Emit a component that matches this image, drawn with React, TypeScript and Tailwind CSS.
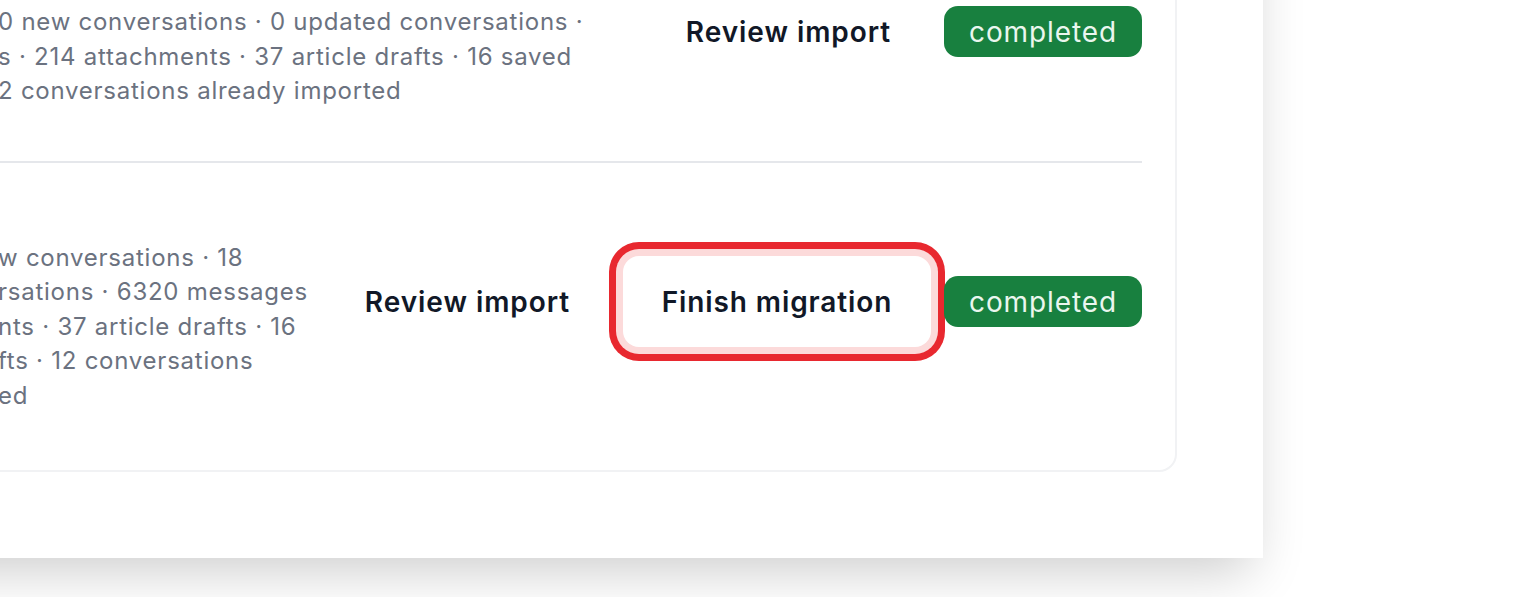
import React from "react";

const Line = ({ hidden, shown }: { hidden: string; shown: string }) => (
  <div className="flex whitespace-nowrap">
    <span className="flex w-0 justify-end">{hidden}</span>
    <span>{shown}</span>
  </div>
);

const Badge = () => (
  <span className="flex h-[51px] w-[198px] items-center justify-center rounded-[14px] bg-[#18803f] text-[28px] leading-none tracking-[0.9px] text-[#eaf6ee]">
    completed
  </span>
);

const ReviewButton = () => (
  <button className="flex h-[91px] w-[285px] items-center justify-center rounded-[16px] text-[28px] font-semibold leading-none tracking-[0.95px] text-[#111827]">
    Review import
  </button>
);

const FinishButton = () => (
  <button className="flex h-[91px] w-[308px] items-center justify-center rounded-[16px] bg-white text-[28px] font-semibold leading-none tracking-[0.9px] text-[#111827] shadow-[0_0_0_7px_#fcdada,0_0_0_14px_#e8282f]">
    Finish migration
  </button>
);

type Row = {
  title: string;
  lines: [string, string][];
  finish: boolean;
};

const rows: Row[] = [
  {
    title: "Zendesk · Mar 12, 2024",
    lines: [
      ["", "0 new conversations · 0 updated conversations ·"],
      ["6320 message", "s · 214 attachments · 37 article drafts · 16 saved"],
      ["drafts · 1", "2 conversations already imported"],
    ],
    finish: false,
  },
  {
    title: "Zendesk · Mar 10",
    lines: [
      ["3 ne", "w conversations · 18"],
      ["updated conve", "rsations · 6320 messages"],
      ["· 214 attachme", "nts · 37 article drafts · 16"],
      ["saved dra", "fts · 12 conversations"],
      ["already import", "ed"],
    ],
    finish: true,
  },
];

export default function App() {
  return (
    <div className="h-[597px] w-[1536px] overflow-hidden bg-white font-['Inter','Noto_Sans',sans-serif]">
      <div className="ml-[-120px] mt-[-161px] w-[1383px] bg-white p-[86px] shadow-[0_25px_50px_-12px_rgba(0,0,0,0.2)]">
        <div className="rounded-[18px] border-2 border-[#f1f2f4] pb-[5px] pl-[30px] pr-[33px]">
          {rows.map((row, i) => (
            <div
              key={i}
              className={`flex items-center gap-5 pb-[52px] pt-[28px] ${
                i > 0 ? "border-t-2 border-[#e5e7eb]" : ""
              }`}
            >
              <div className="min-w-0 flex-1 text-[24px] leading-[34.4px] tracking-[0.75px] text-[#6b7280]">
                <div className="mb-[16px] font-semibold text-[#111827]">
                  <Line hidden={row.title} shown="" />
                </div>
                {row.lines.map(([h, s], j) => (
                  <Line key={j} hidden={h} shown={s} />
                ))}
              </div>
              <div className="flex shrink-0 items-center gap-[13px]">
                <ReviewButton />
                {row.finish && <FinishButton />}
                <Badge />
              </div>
            </div>
          ))}
        </div>
      </div>
    </div>
  );
}
